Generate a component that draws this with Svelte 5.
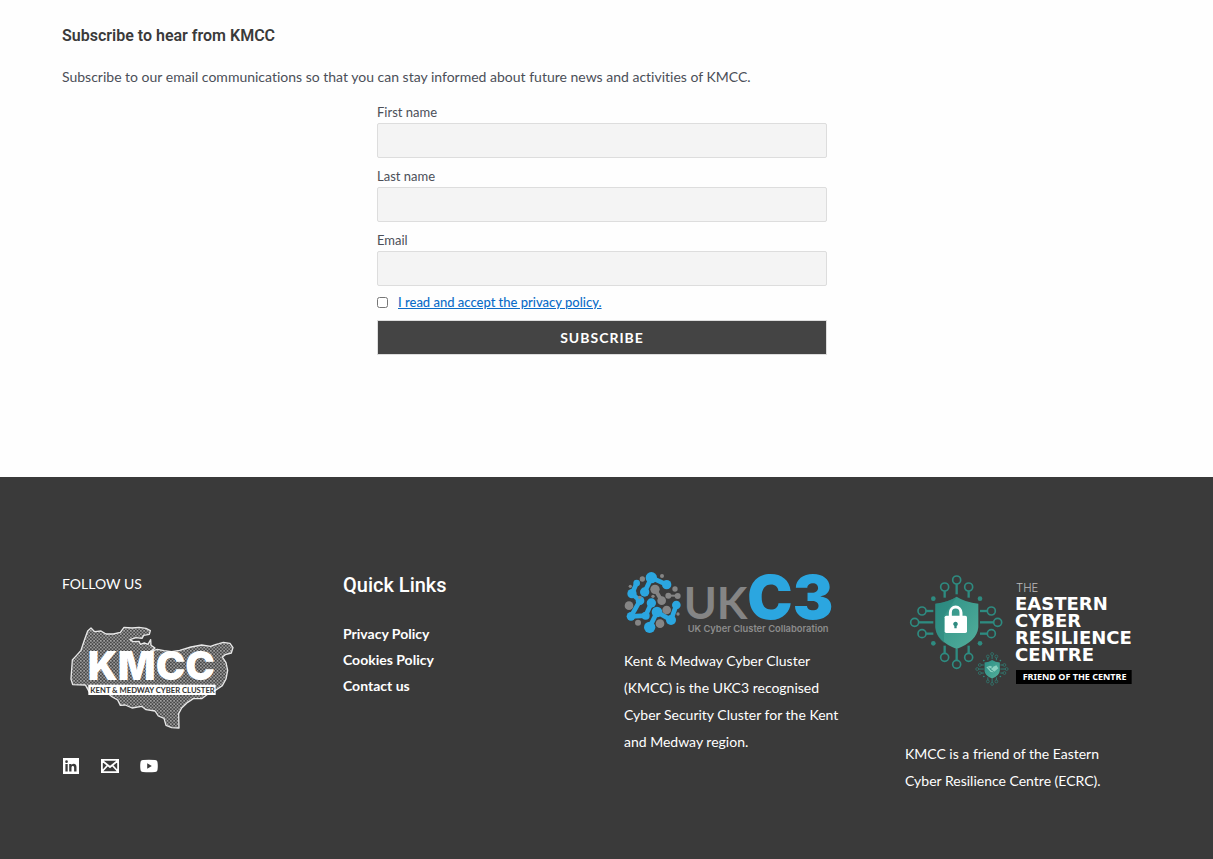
<script>
  const fields = [
    { id: 'first', label: 'First name', type: 'text' },
    { id: 'last', label: 'Last name', type: 'text' },
    { id: 'email', label: 'Email', type: 'email' }
  ];
  const links = ['Privacy Policy', 'Cookies Policy', 'Contact us'];

  // Traces of the circuit around the shield: start point, then the ring at its end
  const traces = [
    [170, 88, 170, 45], [134, 98, 134, 66], [206, 98, 206, 66],
    [170, 252, 170, 298], [134, 242, 134, 277], [206, 242, 206, 277],
    [100, 172, 44, 172], [100, 138, 66, 138], [100, 206, 66, 206],
    [240, 172, 293, 172], [240, 138, 274, 138], [240, 206, 274, 206]
  ];
  const vias = [[100, 101], [240, 101], [100, 235], [240, 235]];

  // Molecule pattern of the UKC3 globe
  const blueDots = [
    [109, 53, 17], [155, 74, 14], [89, 96, 14], [65, 69, 10], [51, 101, 14], [75, 122, 13],
    [48, 169, 13], [92, 167, 12], [109, 129, 14], [126, 156, 16], [104, 202, 17],
    [168, 180, 15], [184, 135, 13]
  ];
  const blueBars = [
    [109, 53, 155, 74], [109, 53, 89, 96], [65, 69, 51, 101], [51, 101, 75, 122], [75, 122, 48, 169],
    [48, 169, 92, 167], [92, 167, 109, 129], [126, 156, 104, 202], [126, 156, 168, 180], [168, 180, 184, 135]
  ];
  const greyDots = [
    [120, 88, 14], [140, 122, 13], [160, 107, 9], [188, 108, 9], [180, 87, 8], [155, 150, 13],
    [135, 191, 13], [42, 137, 13], [69, 188, 9], [82, 57, 8], [141, 48, 6], [46, 79, 5],
    [74, 112, 5], [114, 109, 5], [189, 162, 5]
  ];
</script>

<main>
  <h1>Subscribe to hear from KMCC</h1>
  <p>Subscribe to our email communications so that you can stay informed about future news and activities of KMCC.</p>
  <form onsubmit={(e) => e.preventDefault()}>
    {#each fields as f}
      <div class="field">
        <label for={f.id}>{f.label}</label>
        <input id={f.id} type={f.type} />
      </div>
    {/each}
    <div class="accept">
      <input id="privacy" type="checkbox" aria-labelledby="privacy-label" />
      <label for="privacy" id="privacy-label"><a href="#privacy-policy">I read and accept the privacy policy.</a></label>
    </div>
    <button type="submit">SUBSCRIBE</button>
  </form>
</main>

<footer>
  <section class="follow">
    <p>FOLLOW US</p>
    <svg class="kmcc" viewBox="36 30 528 336" role="img" aria-label="KMCC">
      <defs>
        <pattern id="mesh" width="10" height="10" patternUnits="userSpaceOnUse">
          <rect width="10" height="10" fill="#464646" />
          <rect width="5" height="5" fill="#a0a0a0" />
          <rect x="5" y="5" width="5" height="5" fill="#909090" />
        </pattern>
      </defs>
      <path fill="url(#mesh)" stroke="#e8e8e8" stroke-width="4" stroke-linejoin="round" d="M104 88L113 63L123 54L134 65L153 63L168 72L190 72L211 67L222 52L246 54L267 52L288 55L301 62L298 73L281 76L276 85L258 83L240 89L249 95L267 94L271 103L283 99L294 103L302 89L303 106L315 114L302 124L322 118L342 122L365 125L389 121L423 111L455 105L482 109L496 104L507 101L520 97L540 100L549 113L544 129L526 134L517 141L528 158L533 181L528 207L517 227L498 240L477 250L455 266L430 266L413 277L395 294L386 311L387 354L365 353L348 346L342 325L325 318L315 303L288 299L275 289L246 294L226 285L211 286L203 270L187 261L171 248L119 248L106 225L68 224L63 207L67 150L77 139L93 121Z" />
      <text x="113" y="211" font-size="119" font-weight="900" fill="#fff">KMCC</text>
      <rect x="115" y="224" width="382" height="31" fill="#fff" />
      <text class="lato" x="121" y="248" font-size="23" font-weight="700" fill="#333">KENT &amp; MEDWAY CYBER CLUSTER</text>
    </svg>
    <nav class="social" aria-label="Social">
      <a href="#linkedin" aria-label="LinkedIn">
        <svg viewBox="0 0 18 18"><path fill="#fff" fill-rule="evenodd" d="M1 1h16v16H1zM3.400 7v7.500h2.300V7zM4.550 3.300a1.300 1.300 0 1 0 0 2.700a1.300 1.300 0 1 0 0-2.700zM7.200 7v7.500h2.300v-4c0-2 2.600-2 2.600 0v4h2.400V10c0-3.500-3.500-3.900-5-2V7z" /></svg>
      </a>
      <a href="#email" aria-label="Email">
        <svg viewBox="0 0 18 18"><path fill="none" stroke="#fff" stroke-width="1.800" d="M.9 2.900h16.200v12.200H.9zM1 3.500l8 6.500l8-6.500M1 14.500l5.500-6M17 14.500l-5.500-6" /></svg>
      </a>
      <a href="#youtube" aria-label="YouTube">
        <svg viewBox="0 0 18 18"><path fill="#fff" fill-rule="evenodd" d="M3 3Q9 2.500 15 3Q17.500 3 17.600 6Q18 9 17.600 12Q17.500 15 15 15Q9 15.500 3 15Q.5 15 .4 12Q0 9 .4 6Q.5 3 3 3zM7.200 6.300v5.400L11.800 9z" /></svg>
      </a>
    </nav>
  </section>

  <section class="quick">
    <h2>Quick Links</h2>
    <ul>
      {#each links as l}
        <li><a href="#{l.toLowerCase().replace(' ', '-')}">{l}</a></li>
      {/each}
    </ul>
  </section>

  <section class="ukc3">
    <svg viewBox="27 30 633 195" role="img" aria-label="UKC3">
      <g stroke="#2ba6e0" stroke-width="14" fill="#2ba6e0">
        {#each blueBars as [x1, y1, x2, y2]}<line {x1} {y1} {x2} {y2} />{/each}
        {#each blueDots as [cx, cy, r]}<circle {cx} {cy} {r} stroke="none" />{/each}
      </g>
      <g stroke="#858585" stroke-width="12" fill="#858585">
        <path d="M120 88L140 122" />
        <path stroke-width="6" d="M160 107H188" />
        {#each greyDots as [cx, cy, r]}<circle {cx} {cy} {r} stroke="none" />{/each}
      </g>
      <text class="lato" x="206" y="177" font-size="134" font-weight="700" fill="#858585">UK</text>
      <text x="397" y="176" font-size="182" font-weight="900" fill="#2ba6e0">C3</text>
      <text x="218" y="215" font-size="28" font-weight="600" fill="#8c8c8c">UK Cyber Cluster Collaboration</text>
    </svg>
    <p>Kent &amp; Medway Cyber Cluster (KMCC) is the UKC3 recognised Cyber Security Cluster for the Kent and Medway region.</p>
  </section>

  <section class="ecrc">
    <svg viewBox="15 24 690 345" role="img" aria-label="The Eastern Cyber Resilience Centre">
      <defs>
        <linearGradient id="teal" x2="1" y2="1">
          <stop offset="0" stop-color="#2c8f85" />
          <stop offset="1" stop-color="#53ae9b" />
        </linearGradient>
        <g id="circuit">
          {#each traces as [x1, y1, x2, y2]}
            <line {x1} {y1} {x2} {y2} stroke="#2e8b80" stroke-width="7" />
            <circle cx={x2} cy={y2} r="12" fill="#3a3a3a" stroke="#2e8b80" stroke-width="5" />
          {/each}
          {#each vias as [cx, cy]}<circle {cx} {cy} r="7" fill="#2e8b80" />{/each}
          <path fill="url(#teal)" d="M170 95Q196 112 235 116V187Q231 229 170 252Q109 229 106 187V116Q144 112 170 95Z" />
        </g>
      </defs>
      <use href="#circuit" />
      <path fill="#278078" d="M106 187V116Q144 112 170 95L132 153V234Q109 218 106 187Z" opacity=".45" />
      <path fill="none" stroke="#fff" stroke-width="9" d="M151 156V143a16 17 0 0 1 32 0V156" />
      <rect x="134" y="152" width="67" height="52" rx="5" fill="#fff" />
      <path fill="#2e8b80" d="M167 170a7 7 0 0 1 3 13v7h-7v-7a7 7 0 0 1 4-13Z" />
      <use href="#circuit" transform="translate(216 251) scale(.355)" />
      <path d="M259 307L270 302L278 306L289 301L295 310L281 322L272 321Z" fill="#8bd0c0" />
      <path d="M266 307L277 318M279 306L270 312L283 321" fill="none" stroke="#2e8b80" stroke-width="2" />
      <text x="348" y="80" font-size="34" font-weight="300" fill="#bcbcbc">THE</text>
      <g class="wide" font-size="54" font-weight="700" fill="#fff">
        <text x="345" y="134">EASTERN</text>
        <text x="345" y="186">CYBER</text>
        <text x="345" y="238">RESILIENCE</text>
        <text x="345" y="289">CENTRE</text>
      </g>
      <rect x="348" y="315" width="347" height="42" fill="#000" />
      <text class="noto" x="368" y="345" font-size="27" font-weight="700" fill="#fff">FRIEND OF THE CENTRE</text>
    </svg>
    <p>KMCC is a friend of the Eastern Cyber Resilience Centre (ECRC).</p>
  </section>
</footer>

<style>
  :global(body) {
    margin: 0;
    background: #3a3a3a;
    font-family: Lato, sans-serif;
    font-variant-ligatures: none;
  }
  h1, h2, p, ul { margin: 0; padding: 0; }
  svg { display: block; overflow: visible; font-family: Inter, sans-serif; }
  .lato { font-family: Lato, sans-serif; }
  .noto { font-family: "Noto Sans", sans-serif; }
  .wide { font-family: "DejaVu Sans", sans-serif; }

  main {
    background: #fefefe;
    padding: 24px 71px 122px 62px;
    color: #4b4f58;
  }
  h1 {
    font: 600 16px/24px Roboto, sans-serif;
    color: #3a3a3a;
    margin-bottom: 16px;
  }
  main p { font-size: 14px; line-height: 26px; }
  form {
    max-width: 450px;
    margin: 12px auto 0;
    font-size: 13px;
  }
  .field { margin-bottom: 8px; }
  label { display: block; line-height: 21px; }
  .field input {
    display: block;
    box-sizing: border-box;
    width: 100%;
    height: 35px;
    border: 1px solid #ddd;
    border-radius: 2px;
    background: #f4f4f4;
    font: inherit;
    padding: 0 8px;
  }
  .accept { display: flex; align-items: center; gap: 10px; }
  .accept input { width: 11px; height: 11px; margin: 0; }
  .accept label { line-height: 16px; }
  .accept a { color: #0b6cc8; font-weight: 500; }
  button {
    display: block;
    width: 100%;
    height: 35px;
    margin-top: 10px;
    border: 1px solid #ddd;
    background: #444;
    color: #fff;
    font: 700 14px/20px Lato, sans-serif;
    letter-spacing: 1px;
  }

  footer {
    display: grid;
    grid-template-columns: repeat(4, 1fr);
    gap: 44px;
    padding: 93px 71px 64px 62px;
    color: #fff;
    font-size: 14px;
    line-height: 27px;
  }
  footer a { color: inherit; text-decoration: none; }
  footer p { max-width: 230px; }
  .kmcc { width: 176px; height: 112px; margin-top: 23px; }
  .social { display: flex; gap: 21px; margin-top: 25px; }
  .social svg { width: 18px; height: 18px; }
  h2 { font: 500 20px/30px Roboto, sans-serif; }
  ul { list-style: none; margin-top: 21px; font-weight: 700; line-height: 26px; }
  .ukc3 svg { width: 211px; height: 65px; margin-bottom: 12px; }
  .ecrc svg { width: 230px; height: 115px; margin: 3px 0 52px; }
</style>
